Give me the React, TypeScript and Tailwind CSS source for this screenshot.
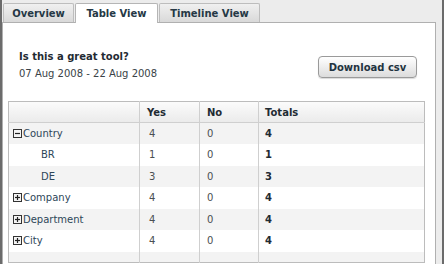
import React from "react";

const rows = [
  { label: "Country", icon: "minus", indent: false, yes: 4, no: 0, total: 4 },
  { label: "BR", icon: null, indent: true, yes: 1, no: 0, total: 1 },
  { label: "DE", icon: null, indent: true, yes: 3, no: 0, total: 3 },
  { label: "Company", icon: "plus", indent: false, yes: 4, no: 0, total: 4 },
  { label: "Department", icon: "plus", indent: false, yes: 4, no: 0, total: 4 },
  { label: "City", icon: "plus", indent: false, yes: 4, no: 0, total: 4 },
];

function ToggleBox({ kind }: { kind: string }) {
  return (
    <svg width="9" height="9" viewBox="0 0 9 9" className="shrink-0">
      <rect x="0.5" y="0.5" width="8" height="8" fill="#f4f4f4" stroke="#333" />
      <path d="M2 4.5 H7" stroke="#222" strokeWidth="1.2" />
      {kind === "plus" && <path d="M4.5 2 V7" stroke="#222" strokeWidth="1.2" />}
    </svg>
  );
}

export default function App() {
  const tabs = ["Overview", "Table View", "Timeline View"];
  const widths = ["w-[71px]", "w-[83px]", "w-[101px]"];

  return (
    <div
      className="w-[444px] h-[264px] flex border-l-2 border-r-2 border-[#6b6b6b] bg-[#ececec] overflow-hidden text-[10px] text-[#2b3d4a]"
      style={{ fontFamily: '"DejaVu Sans", Verdana, sans-serif' }}
    >
      <div className="flex flex-col flex-1 pr-[6px]">
        {/* Tabs */}
        <div className="h-[22px] flex items-end pl-px gap-px shrink-0">
          {tabs.map((t, i) =>
            i === 1 ? (
              <div
                key={t}
                className={`${widths[i]} h-[20px] -mb-px relative z-10 bg-white border border-b-0 border-[#b5b5b5] rounded-t-[2px] flex items-center justify-center font-bold text-[#253845]`}
              >
                {t}
              </div>
            ) : (
              <div
                key={t}
                className={`${widths[i]} h-[19px] bg-gradient-to-b from-[#f0f0f0] to-[#d9d9d9] border border-b-0 border-[#bdbdbd] rounded-t-[2px] flex items-center justify-center font-bold text-[#253845]`}
              >
                {t}
              </div>
            )
          )}
        </div>

        {/* Panel */}
        <div className="flex-1 bg-white border-t border-r border-l border-[#b0b0b0] pl-[5px] pr-[9px]">
          <div className="h-[78px] flex justify-between items-start pt-[28px]">
            <div className="pl-[11px]">
              <div className="font-bold text-[#1f2b33] leading-[12px]">Is this a great tool?</div>
              <div className="mt-[5px] leading-[12px] text-[#3a4348]">07 Aug 2008 - 22 Aug 2008</div>
            </div>
            <button className="mt-[5px] mr-[9px] w-[99px] h-[22px] rounded-[4px] border border-[#9a9a9a] bg-gradient-to-b from-white to-[#dcdcdc] font-bold text-[#1f3340] shadow-[0_1px_1px_rgba(0,0,0,0.15)]">
              Download csv
            </button>
          </div>

          <table className="w-[417px] border border-[#bcbcbc] border-collapse table-fixed">
            <colgroup>
              <col className="w-[131px]" />
              <col className="w-[60px]" />
              <col className="w-[59px]" />
              <col />
            </colgroup>
            <thead>
              <tr className="h-[21px] bg-gradient-to-b from-[#fbfbfb] to-[#ebebeb] border-b border-[#cfcfcf]">
                <th className="border-r border-[#cfcfcf]" />
                <th className="border-r border-[#cfcfcf] text-left pl-[7px] font-bold text-[#1f2b33]">Yes</th>
                <th className="border-r border-[#cfcfcf] text-left pl-[7px] font-bold text-[#1f2b33]">No</th>
                <th className="text-left pl-[6px] font-bold text-[#1f2b33]">Totals</th>
              </tr>
            </thead>
            <tbody>
              {rows.map((r, i) => (
                <tr key={r.label} className={`h-[21.5px] ${i % 2 === 0 ? "bg-[#f3f3f3]" : "bg-white"}`}>
                  <td className="border-r border-[#cfcfcf] pl-[4px]">
                    <div className={`flex items-center gap-px ${r.indent ? "pl-[28px]" : ""} text-[#2d4658]`}>
                      {r.icon && <ToggleBox kind={r.icon} />}
                      <span>{r.label}</span>
                    </div>
                  </td>
                  <td className="border-r border-[#cfcfcf] pl-[9px] text-[#4a4f52]">{r.yes}</td>
                  <td className="border-r border-[#cfcfcf] pl-[7px] text-[#4a4f52]">{r.no}</td>
                  <td className="pl-[6px] font-bold text-[#1f2b33]">{r.total}</td>
                </tr>
              ))}
              <tr className="h-[11px] bg-[#f3f3f3]">
                <td className="border-r border-[#cfcfcf]" />
                <td className="border-r border-[#cfcfcf]" />
                <td className="border-r border-[#cfcfcf]" />
                <td />
              </tr>
            </tbody>
          </table>
        </div>
      </div>
    </div>
  );
}
